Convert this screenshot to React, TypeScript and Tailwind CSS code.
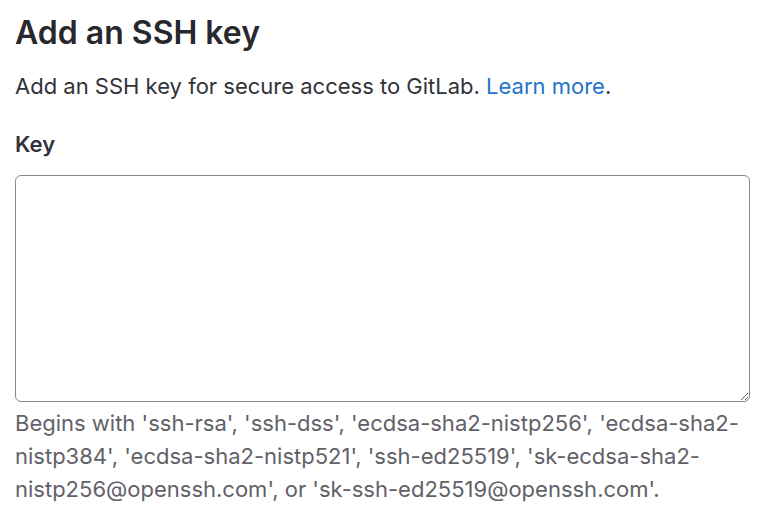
export default function App() {
  return (
    <div className="bg-white min-h-[514px] px-[15px] pt-[13px] text-[#333238]" style={{ fontFamily: "Inter, 'Noto Sans', sans-serif" }}>
      <h2 className="text-[32px] leading-[40px] font-semibold text-[#28272d]">Add an SSH key</h2>
      <p className="mt-[19px] text-[22px] leading-[28px]">
        Add an SSH key for secure access to GitLab. <a className="text-[#1f75cb]" href="#">Learn more</a>.
      </p>
      <label className="block mt-[30px] text-[22px] leading-[28px] font-semibold">Key</label>
      <textarea className="block mt-[17px] w-[735px] h-[227px] border border-[#89888d] rounded-[6px] bg-white" />
      <p className="mt-[5px] text-[22px] leading-[33px] text-[#626168] w-[735px]">
        Begins with 'ssh-rsa', 'ssh-dss', 'ecdsa-sha2-nistp256', 'ecdsa-sha2-nistp384', 'ecdsa-sha2-nistp521', 'ssh-ed25519', 'sk-ecdsa-sha2-nistp256@openssh.com', or 'sk-ssh-ed25519@openssh.com'.
      </p>
    </div>
  );
}
